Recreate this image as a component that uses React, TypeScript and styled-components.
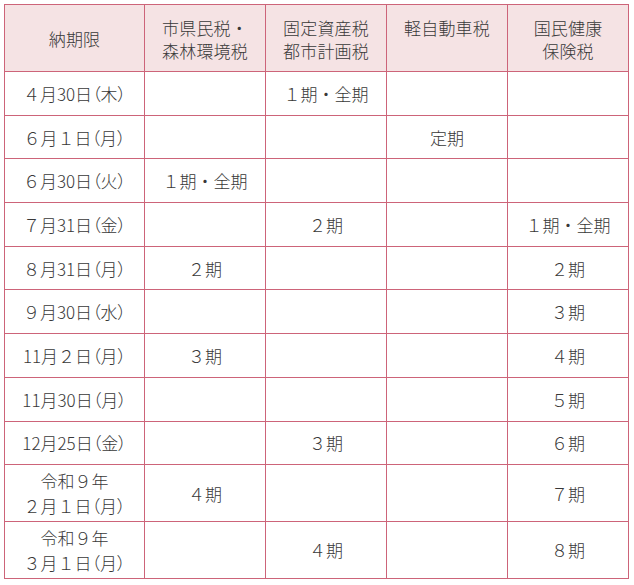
import React from "react";
import styled, { createGlobalStyle } from "styled-components";

const Global = createGlobalStyle`
  html, body { margin: 0; padding: 0; background: #fff; }
  body { font-family: "Noto Sans CJK JP", "Noto Sans", sans-serif; color: #383838; }
`;

const Wrap = styled.div`
  padding: 4px 0 0 4px;
`;

const Table = styled.table`
  border-collapse: collapse;
  width: 624px;
  table-layout: fixed;
  font-size: 17px;
  font-weight: 300;
`;

const Col = styled.col<{ $w: number }>`
  width: ${(p) => p.$w}px;
`;

const HeadRow = styled.tr`
  height: 67px;
`;

const Th = styled.th<{ $top?: boolean }>`
  background: #f5e3e4;
  border: 1px solid #cd6479;
  font-weight: 300;
  line-height: 23px;
  padding: ${(p) => (p.$top ? "11px 0 0" : "0")};
  vertical-align: ${(p) => (p.$top ? "top" : "middle")};
  text-align: center;
  color: #383838;
  letter-spacing: 0.01em;
`;

const Tr = styled.tr<{ $tall?: boolean }>`
  height: ${(p) => (p.$tall ? "56.7px" : "43.7px")};
`;

const Td = styled.td`
  border: 1px solid #cd6479;
  text-align: center;
  vertical-align: middle;
  line-height: 25px;
  padding: 0;
`;

const Paren = styled.span`
  font-feature-settings: "palt";
`;

const day = (md: string, wd: string) => (
  <>
    {md}
    <Paren>（{wd}）</Paren>
  </>
);

const headers: { label: React.ReactNode; top: boolean }[] = [
  { label: "納期限", top: false },
  { label: <>市県民税・<br />森林環境税</>, top: true },
  { label: <>固定資産税<br />都市計画税</>, top: true },
  { label: "軽自動車税", top: true },
  { label: <>国民健康<br />保険税</>, top: true },
];

type Row = { date: React.ReactNode; cells: string[]; tall?: boolean };

const rows: Row[] = [
  { date: day("４月30日", "木"), cells: ["", "１期・全期", "", ""] },
  { date: day("６月１日", "月"), cells: ["", "", "定期", ""] },
  { date: day("６月30日", "火"), cells: ["１期・全期", "", "", ""] },
  { date: day("７月31日", "金"), cells: ["", "２期", "", "１期・全期"] },
  { date: day("８月31日", "月"), cells: ["２期", "", "", "２期"] },
  { date: day("９月30日", "水"), cells: ["", "", "", "３期"] },
  { date: day("11月２日", "月"), cells: ["３期", "", "", "４期"] },
  { date: day("11月30日", "月"), cells: ["", "", "", "５期"] },
  { date: day("12月25日", "金"), cells: ["", "３期", "", "６期"] },
  { date: <>令和９年<br />{day("２月１日", "月")}</>, cells: ["４期", "", "", "７期"], tall: true },
  { date: <>令和９年<br />{day("３月１日", "月")}</>, cells: ["", "４期", "", "８期"], tall: true },
];

const widths = [140, 121, 121, 121, 121];

export default function App() {
  return (
    <>
      <Global />
      <Wrap>
        <Table>
          <colgroup>
            {widths.map((w, i) => (
              <Col key={i} $w={w} />
            ))}
          </colgroup>
          <thead>
            <HeadRow>
              {headers.map((h, i) => (
                <Th key={i} $top={h.top}>{h.label}</Th>
              ))}
            </HeadRow>
          </thead>
          <tbody>
            {rows.map((r, i) => (
              <Tr key={i} $tall={r.tall}>
                <Td>{r.date}</Td>
                {r.cells.map((c, j) => (
                  <Td key={j}>{c}</Td>
                ))}
              </Tr>
            ))}
          </tbody>
        </Table>
      </Wrap>
    </>
  );
}
